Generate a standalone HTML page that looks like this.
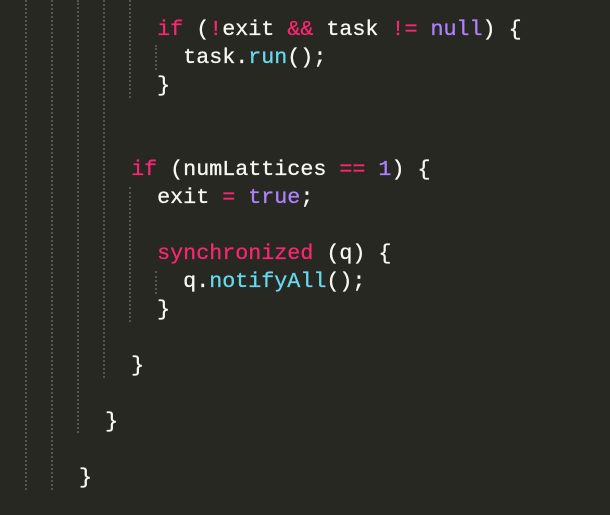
<!DOCTYPE html>
<html><head><meta charset="utf-8"><style>
html,body{margin:0;padding:0;background:#272822;width:610px;height:515px;overflow:hidden}
.c{position:absolute;left:27px;top:16px;font-family:"Liberation Mono",monospace;font-size:21.7px;line-height:28px;color:#f8f8f2;white-space:pre;-webkit-text-stroke:0.3px currentColor}
.k{color:#f92672}.n{color:#ae81ff}.f{color:#66d9ef}
.g{position:absolute;width:0;border-left:2px dotted #55554d}
</style></head><body>
<div class="g" style="left:25px;top:0;height:490px"></div>
<div class="g" style="left:51px;top:0;height:490px"></div>
<div class="g" style="left:77px;top:0;height:433px"></div>
<div class="g" style="left:103px;top:0;height:378px"></div>
<div class="g" style="left:129px;top:0;height:98px"></div>
<div class="g" style="left:129px;top:187px;height:135px"></div>
<div class="g" style="left:155px;top:45px;height:25px"></div>
<div class="g" style="left:155px;top:271px;height:23px"></div>
<div class="c">          <span class="k">if</span> (<span class="k">!</span>exit <span class="k">&amp;&amp;</span> task <span class="k">!=</span> <span class="n">null</span>) {
            task.<span class="f">run</span>();
          }


        <span class="k">if</span> (numLattices <span class="k">==</span> <span class="n">1</span>) {
          exit <span class="k">=</span> <span class="n">true</span>;

          <span class="k">synchronized</span> (q) {
            q.<span class="f">notifyAll</span>();
          }

        }

      }

    }</div>
</body></html>
